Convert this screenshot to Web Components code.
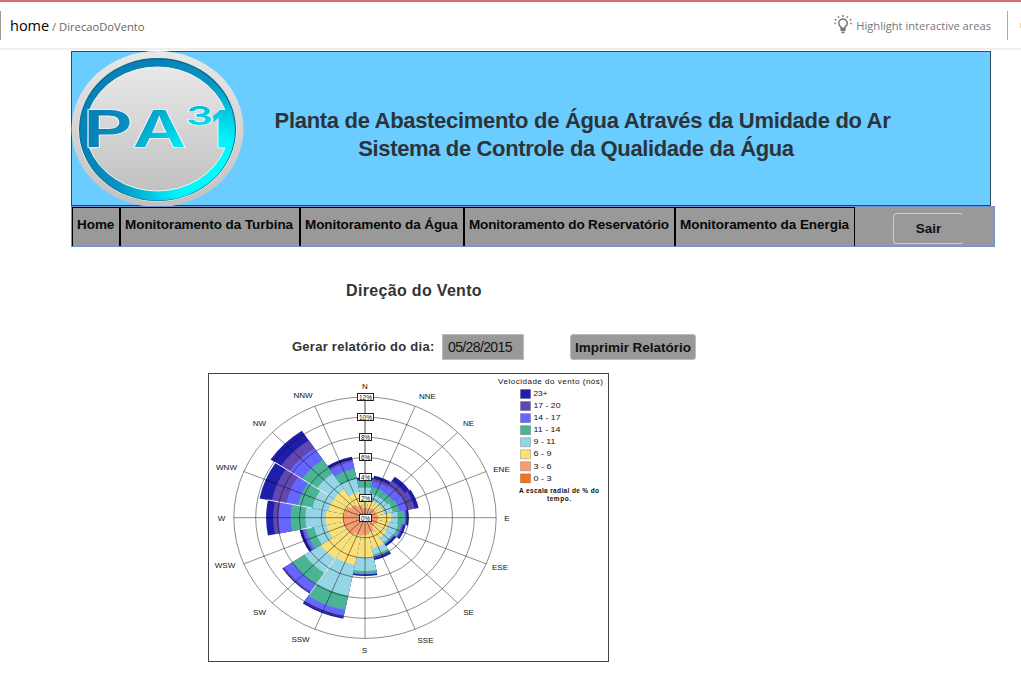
<!DOCTYPE html>
<html lang="pt-BR">
<head>
<meta charset="utf-8">
<title>Direção do Vento</title>
<style>
body{margin:0;background:#fff;font-family:"Liberation Sans",Arial,sans-serif;color:#333}
</style>
</head>
<body>
<wind-page></wind-page>
<script>
const define=(name,html,setup)=>customElements.define(name,class extends HTMLElement{
  constructor(){
    super();
    const t=document.createElement('template');
    t.innerHTML=html;
    this.attachShadow({mode:'open'}).append(t.content.cloneNode(true));
    if(setup)setup(this.shadowRoot,this);
  }
});

define('top-bar',`<style>
:host{display:flex;box-sizing:border-box;height:51px;border-top:2px solid #d6706f;font-family:"Open Sans",sans-serif;padding-bottom:1px;background:#fff}
.in{flex:1;display:flex;align-items:flex-start;border-bottom:2px solid #eee}
.crumb{height:29px;margin-top:9px;border-left:1px solid #999;padding-left:9px;box-sizing:border-box;white-space:nowrap;line-height:29px;color:#666;font-size:11.2px}
b{font:400 14.5px/29px "Open Sans",sans-serif;color:#000}
.hl{margin-left:auto;display:flex;height:29px;margin-top:9px;line-height:30px;font-size:11.1px;color:#777;white-space:nowrap}
.hl svg{margin:4px 4px 0 0}
.end{height:29px;margin:9px 0 0 16px;border-left:1px solid #aaa;width:14px;box-sizing:border-box;display:flex;justify-content:flex-end;align-items:center}
.end i{width:1px;height:5px;background:#f6cf94}
</style><div class="in"><div class="crumb"><b>home</b> / DirecaoDoVento</div>
<div class="hl"><svg width="18" height="19" viewBox="0 0 18 19" fill="none" stroke="#777"><path stroke-width="1.5" d="M7 13.2V12C5.3 10.8 4.7 9.7 4.7 8.3a4.3 4.3 0 0 1 8.6 0c0 1.4-.6 2.5-2.3 3.7v1.2z"/><path stroke-width="1.8" d="M6.5 15h5M7.5 17.3h3"/><path stroke-width="1.5" d="M8.9 0v2M4.2 1.3l.9 1.4M13.7 1.3l-.9 1.4M.8 4.3l1.6.8M17.2 4.3l-1.6.8M.3 8.6h1.5M16.2 8.6h1.5"/></svg><span>Highlight interactive areas</span></div><div class="end"><i></i></div></div>`);

define('brand-logo',`<style>:host{display:block;width:173px;height:156px}svg{display:block;overflow:visible}text{font-family:Inter,"DejaVu Sans",sans-serif;font-weight:600}</style>
<svg width="173" height="156" viewBox="0 0 173 156">
<defs><linearGradient id="g" x1="0" y1="0" x2="0" y2="1"><stop stop-color="#e8e8e8"/><stop offset="1" stop-color="#c1c1c1"/></linearGradient>
<radialGradient id="c" gradientUnits="userSpaceOnUse" cx="142" cy="125" r="128"><stop stop-color="#00ffff"/><stop offset=".3" stop-color="#00f4fb"/><stop offset=".75" stop-color="#0792c1"/><stop offset="1" stop-color="#0782b6"/></radialGradient></defs>
<ellipse cx="86.5" cy="78" rx="86" ry="78" fill="url(#g)"/>
<ellipse cx="86.5" cy="79" rx="79" ry="71.5" fill="#f5f7f7"/>
<ellipse cx="86.5" cy="78.5" rx="78.5" ry="71.5" fill="#08678e"/>
<ellipse cx="86.5" cy="79" rx="77.5" ry="70.5" fill="url(#c)"/>
<path d="M18.5 59A72 65 0 0 1 154 59H147V97H154A72 65 0 0 1 18.5 97H22V59Z" fill="url(#g)" stroke="#f3f5f5"/>
<g fill="url(#c)" stroke="#f2f4f4" stroke-width="1.6" paint-order="stroke"><text x="12" y="96" font-size="51" textLength="50" lengthAdjust="spacingAndGlyphs">P</text><text x="62" y="96" font-size="51" textLength="53" lengthAdjust="spacingAndGlyphs">A</text><text x="115" y="74" font-size="26" textLength="27" lengthAdjust="spacingAndGlyphs">3</text><text x="140" y="96" font-size="51" textLength="19" lengthAdjust="spacingAndGlyphs" stroke="none">1</text></g>
</svg>`);

define('site-header',`<style>
:host{display:flex;box-sizing:border-box;width:920px;height:155px;background:#6bcdff;border:1px solid #2d4a5c}
brand-logo{flex:none;margin:-1px 0 0 -1px}
h1{margin:55px 0 0;width:677px;text-align:center;font-size:22px;line-height:28px;letter-spacing:-.31px;font-weight:700;color:#2c343a;white-space:nowrap}
h1 div{padding-right:13px;letter-spacing:-.36px}
</style><brand-logo></brand-logo><h1><slot></slot><div><slot name="subtitle"></slot></div></h1>`);

define('nav-item',`<style>:host{display:block;box-sizing:border-box;height:39px;border:solid #000;border-width:1px 1px 0;padding:7px 0 0 4px;font-weight:700;font-size:13.5px;line-height:19px;letter-spacing:-.05px;white-space:nowrap;color:#080808}</style><slot></slot>`);

define('nav-bar',`<style>
:host{display:flex;box-sizing:border-box;width:924px;height:41px;background:#999;border:1px solid #7093cf}
button{margin:6px 0 0 38px;width:71px;height:31px;box-sizing:border-box;border:1px solid #ccc;border-right-color:#999;border-radius:4px;background:none;font:700 13.5px "Liberation Sans",sans-serif;color:#111;padding:0 0 1px}
</style>
<nav-item style="width:48px">Home</nav-item><nav-item style="width:180px">Monitoramento da Turbina</nav-item><nav-item style="width:164px;letter-spacing:-.09px">Monitoramento da Água</nav-item><nav-item style="width:211px;letter-spacing:-.14px">Monitoramento do Reservatório</nav-item><nav-item style="width:180px">Monitoramento da Energia</nav-item><button>Sair</button>`);

define('report-form',`<style>
:host{display:flex;align-items:center;height:26px;padding-left:292px}
label{width:150px;font-weight:700;font-size:13px;letter-spacing:.26px;white-space:nowrap;padding-bottom:2px}
.d{width:82px;height:26px;box-sizing:border-box;border:1px solid #bbb;background:#999;padding-left:5px;line-height:25px;font-size:14px;letter-spacing:-.62px;color:#111}
button{margin-left:46px;width:126px;height:26px;box-sizing:border-box;border:1px solid #bbb;border-radius:3px;background:#999;padding:0;font:700 13.5px "Liberation Sans",sans-serif;letter-spacing:-.02px;color:#111;white-space:nowrap}
</style><label>Gerar relatório do dia:</label><div class="d">05/28/2015</div><button>Imprimir Relatório</button>`);

define('wind-rose',`<style>:host{display:block;width:401px;height:289px}svg{display:block}text{font-family:"Liberation Sans",Arial,sans-serif;font-size:8px;fill:#111}</style><svg width="401" height="289" viewBox="208 373 401 289"></svg>`,root=>{
  const colors=['#fb9c72','#fbdf77','#96d5e6','#4ab494','#6666ff','#6048b0','#1e1eaa'];
  // cumulative percentages, clockwise from north, slowest speed first
  const data=[
    [.95,2.2,3,3.75,3.8,3.85,4],[1,1.8,2.4,3.1,3.7,4.0,4.25],[1.1,1.8,2.4,3.05,3.8,4.4,4.9],[1.1,1.8,2.6,3.2,3.9,4.65,5],
    [1.2,2.4,3,3.65,3.75,3.8,4],[1.2,2.2,3.1,3.4,3.5,3.6,3.8],[1.1,2.4,3,3.15,3.2,3.25,3.45],[1.5,3.1,3.75,3.95,4.05,4.1,4.28],
    [1.7,4,5.3,5.6,5.62,5.65,5.8],[1.8,4.8,7.9,9.35,9.95,10.08,10.25],[2,4.9,6.65,8,8.85,9,9.1],[2,3.6,4.75,5.5,5.75,5.85,6.1],
    [2,3.6,5.45,6.8,7.9,8.4,9.05],[1.9,3.4,4.9,6.25,7.35,8.7,9.84],[1.6,3.4,5.28,6.93,8.3,9.26,10.4],[1.3,2.6,3.95,4.95,5.7,5.9,6.17]];
  const cx=365,cy=517.7,sx=10.93,sy=10.06;
  const pt=(deg,r)=>{const a=deg*Math.PI/180;return (cx+Math.sin(a)*r*sx).toFixed(2)+' '+(cy-Math.cos(a)*r*sy).toFixed(2)};
  let s='<rect x="208.5" y="373.5" width="400" height="288" fill="#fff" stroke="#444"/>';
  data.forEach((d,i)=>{
    for(let k=6;k>=0;k--)
      s+=`<path fill="${colors[k]}" d="M${cx} ${cy}L${pt(i*22.5-11.25,d[k])}A${d[k]*sx} ${d[k]*sy} 0 0 1 ${pt(i*22.5+11.25,d[k])}Z"/>`;
  });
  [[213.75,4.9,9.1],[281.25,5,9.1],[303.75,4,9.9],[258.75,5,6]].forEach(([a,r,q])=>s+=`<path stroke="#fff" stroke-width=".9" d="M${pt(a,r)}L${pt(a,q)}"/>`);
  for(let r=2;r<=12;r+=2)s+=`<ellipse cx="${cx}" cy="${cy}" rx="${r*sx}" ry="${r*sy}" fill="none" stroke="#000" stroke-opacity=".5" stroke-width=".9"/>`;
  for(let i=0;i<16;i++)s+=`<path stroke="#000" stroke-opacity="${i?.5:.8}" stroke-width=".9" d="M${cx} ${cy}L${pt(i*22.5,12)}"/>`;
  for(let r=0;r<=12;r+=2){const w=r>9?16:12,y=Math.round(cy-r*sy);
    s+=`<rect x="${cx-w/2+.5}" y="${y-3.5}" width="${w}" height="7" fill="#fff" stroke="#222"/><text x="${cx+.5}" y="${y+2.5}" text-anchor="middle" textLength="${w-3}" lengthAdjust="spacingAndGlyphs" style="font-size:7px">${r}%</text>`;}
  [['N',365,389],['NNE',427.5,399],['NE',468.5,426],['ENE',501.5,472],['E',507,521],['ESE',500,570],['SE',468.5,615],['SSE',425.5,643],['S',364.5,653],['SSW',300.5,642],['SW',259.5,615],['WSW',225,568],['W',221.5,521],['WNW',226.5,470],['NW',259.5,426],['NNW',303,398]]
    .forEach(([t,x,y])=>s+=`<text x="${x}" y="${y-.4}" text-anchor="middle">${t}</text>`);
  s+='<text x="498" y="384" textLength="105">Velocidade do vento (nós)</text>';
  [['23+','#1e1eaa',14],['17 - 20','#6048b0',27],['14 - 17','#6666ff',27],['11 - 14','#4ab494',27],['9 - 11','#96d5e6',22],['6 - 9','#fbdf77',18],['3 - 6','#fb9c72',18],['0 - 3','#f47421',18]]
    .forEach(([t,c,w],i)=>s+=`<rect x="520.5" y="${389.5+i*12.05}" width="10" height="9" fill="${c}" stroke="#000" stroke-opacity=".2"/><text x="533.5" y="${396.2+i*12.05}" textLength="${w}" lengthAdjust="spacingAndGlyphs">${t}</text>`);
  s+='<text x="519" y="492.5" textLength="80" style="font-size:6.5px;font-weight:700">A escala radial de % do</text><text x="547" y="501" textLength="24" style="font-size:6.5px;font-weight:700">tempo.</text>';
  root.querySelector('svg').innerHTML=s;
});

define('wind-page',`<style>
:host{display:block;width:1021px;height:681px;overflow:hidden}
main{display:flex;flex-direction:column}
site-header,nav-bar{margin-left:71px}
h2{margin:34px 0 0 346px;font-size:16px;line-height:20px;letter-spacing:.33px;font-weight:700;white-space:nowrap}
report-form{margin-top:33px}
wind-rose{margin:13px 0 0 208px}
</style><top-bar></top-bar><main><site-header>Planta de Abastecimento de Água Através da Umidade do Ar<span slot="subtitle">Sistema de Controle da Qualidade da Água</span></site-header><nav-bar></nav-bar><h2>Direção do Vento</h2><report-form></report-form><wind-rose></wind-rose></main>`);
</script>
</body>
</html>
